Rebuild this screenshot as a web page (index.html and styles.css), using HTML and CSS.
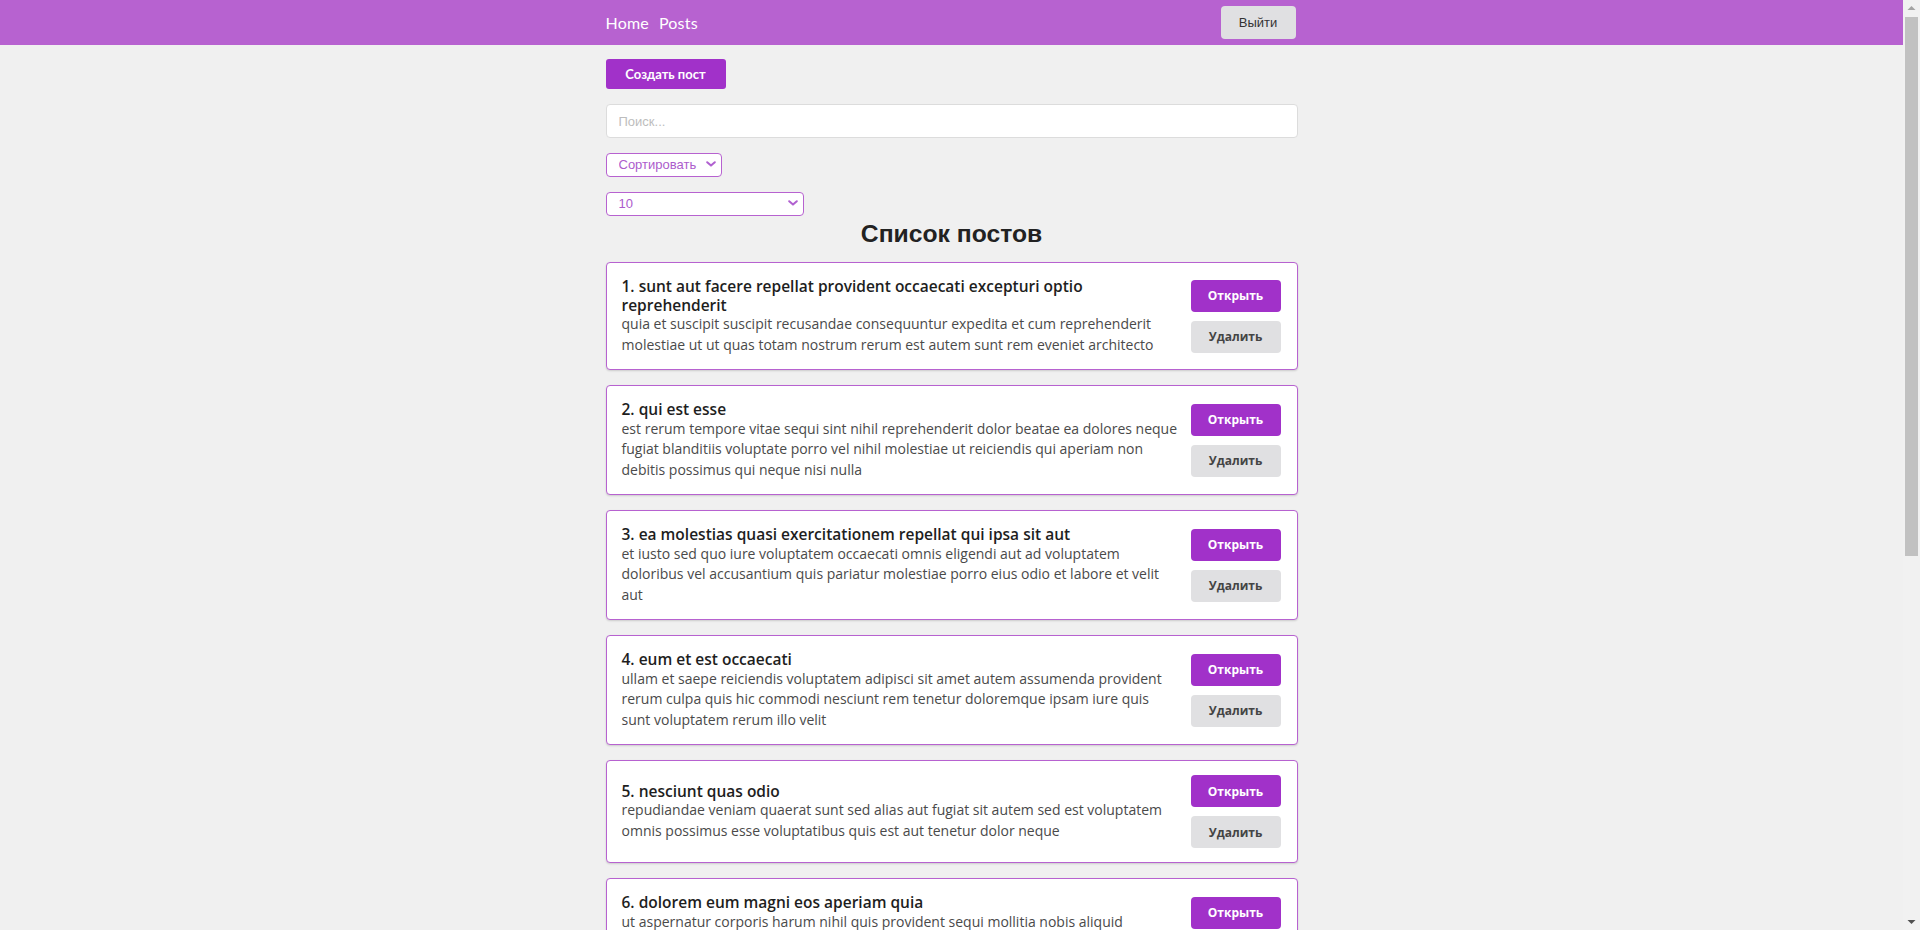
FILE: index.html
```html
<!DOCTYPE html>
<html lang="ru">
<head>
<meta charset="utf-8">
<title>Posts</title>
<link rel="stylesheet" href="styles.css">
</head>
<body>
<div class="page">
<header class="navbar">
  <div class="container nav-inner">
    <nav class="nav-links">
      <a href="#" class="nav-link">Home</a>
      <a href="#" class="nav-link">Posts</a>
    </nav>
    <button class="btn-logout">Выйти</button>
  </div>
</header>
<main class="container main">
  <button class="btn-create">Создать пост</button>
  <input class="search" type="text" placeholder="Поиск...">
  <div class="select-wrap select-sort">
    <select class="select"><option>Сортировать</option><option>По названию</option><option>По описанию</option></select>
    <svg class="chevron" viewBox="0 0 10 6" width="10" height="6"><path d="M1.2 1.2 L5 4.6 L8.8 1.2" fill="none" stroke="currentColor" stroke-width="2" stroke-linecap="round" stroke-linejoin="round"/></svg>
  </div>
  <div class="select-wrap select-limit">
    <select class="select"><option>10</option><option>25</option><option>-1</option></select>
    <svg class="chevron" viewBox="0 0 10 6" width="10" height="6"><path d="M1.2 1.2 L5 4.6 L8.8 1.2" fill="none" stroke="currentColor" stroke-width="2" stroke-linecap="round" stroke-linejoin="round"/></svg>
  </div>
  <h1 class="list-title">Список постов</h1>
  <div class="post-list">
    <div class="post">
      <div class="post-content">
        <div class="post-title">1. sunt aut facere repellat provident occaecati excepturi optio reprehenderit</div>
        <div class="post-body">quia et suscipit suscipit recusandae consequuntur expedita et cum reprehenderit molestiae ut ut quas totam nostrum rerum est autem sunt rem eveniet architecto</div>
      </div>
      <div class="post-btns"><button class="btn-open">Открыть</button><button class="btn-delete">Удалить</button></div>
    </div>
    <div class="post">
      <div class="post-content">
        <div class="post-title">2. qui est esse</div>
        <div class="post-body">est rerum tempore vitae sequi sint nihil reprehenderit dolor beatae ea dolores neque fugiat blanditiis voluptate porro vel nihil molestiae ut reiciendis qui aperiam non debitis possimus qui neque nisi nulla</div>
      </div>
      <div class="post-btns"><button class="btn-open">Открыть</button><button class="btn-delete">Удалить</button></div>
    </div>
    <div class="post">
      <div class="post-content">
        <div class="post-title">3. ea molestias quasi exercitationem repellat qui ipsa sit aut</div>
        <div class="post-body">et iusto sed quo iure voluptatem occaecati omnis eligendi aut ad voluptatem doloribus vel accusantium quis pariatur molestiae porro eius odio et labore et velit aut</div>
      </div>
      <div class="post-btns"><button class="btn-open">Открыть</button><button class="btn-delete">Удалить</button></div>
    </div>
    <div class="post">
      <div class="post-content">
        <div class="post-title">4. eum et est occaecati</div>
        <div class="post-body">ullam et saepe reiciendis voluptatem adipisci sit amet autem assumenda provident rerum culpa quis hic commodi nesciunt rem tenetur doloremque ipsam iure quis sunt voluptatem rerum illo velit</div>
      </div>
      <div class="post-btns"><button class="btn-open">Открыть</button><button class="btn-delete">Удалить</button></div>
    </div>
    <div class="post">
      <div class="post-content">
        <div class="post-title">5. nesciunt quas odio</div>
        <div class="post-body">repudiandae veniam quaerat sunt sed alias aut fugiat sit autem sed est voluptatem omnis possimus esse voluptatibus quis est aut tenetur dolor neque</div>
      </div>
      <div class="post-btns"><button class="btn-open">Открыть</button><button class="btn-delete">Удалить</button></div>
    </div>
    <div class="post">
      <div class="post-content">
        <div class="post-title">6. dolorem eum magni eos aperiam quia</div>
        <div class="post-body">ut aspernatur corporis harum nihil quis provident sequi mollitia nobis aliquid molestiae perspiciatis et ea nemo ab reprehenderit accusantium quas voluptate dolores velit et doloremque molestiae</div>
      </div>
      <div class="post-btns"><button class="btn-open">Открыть</button><button class="btn-delete">Удалить</button></div>
    </div>
    <div class="post">
      <div class="post-content">
        <div class="post-title">7. magnam facilis autem</div>
        <div class="post-body">dolore placeat quibusdam ea quo vitae magni quis enim qui quis quo nemo aut saepe quidem repellat excepturi ut quia sunt ut sequi eos ea sed quas</div>
      </div>
      <div class="post-btns"><button class="btn-open">Открыть</button><button class="btn-delete">Удалить</button></div>
    </div>
    <div class="post">
      <div class="post-content">
        <div class="post-title">8. dolorem dolore est ipsam</div>
        <div class="post-body">dignissimos aperiam dolorem qui eum facilis quibusdam animi sint suscipit qui sint possimus cum quaerat magni maiores excepturi ipsam ut commodi dolor voluptatum modi aut vitae</div>
      </div>
      <div class="post-btns"><button class="btn-open">Открыть</button><button class="btn-delete">Удалить</button></div>
    </div>
    <div class="post">
      <div class="post-content">
        <div class="post-title">9. nesciunt iure omnis dolorem tempora et accusantium</div>
        <div class="post-body">consectetur animi nesciunt iure dolore enim quia ad veniam autem ut quam aut nobis et est aut quod aut provident voluptas autem voluptas</div>
      </div>
      <div class="post-btns"><button class="btn-open">Открыть</button><button class="btn-delete">Удалить</button></div>
    </div>
    <div class="post">
      <div class="post-content">
        <div class="post-title">10. optio molestias id quia eum</div>
        <div class="post-body">quo et expedita modi cum officia vel magni doloribus qui repudiandae vero nisi sit quos veniam quod sed accusamus veritatis error</div>
      </div>
      <div class="post-btns"><button class="btn-open">Открыть</button><button class="btn-delete">Удалить</button></div>
    </div>
  </div>
</main>
</div>
<aside class="scrollbar" aria-hidden="true">
  <div class="sb-btn">
    <svg viewBox="0 0 17 17" width="17" height="17"><path d="M4.5 10 L8.5 6 L12.5 10 Z" fill="#a3a3a3"/></svg>
  </div>
  <div class="sb-track"><div class="sb-thumb"></div></div>
  <div class="sb-btn">
    <svg viewBox="0 0 17 17" width="17" height="17"><path d="M4.5 7 L8.5 11 L12.5 7 Z" fill="#505050"/></svg>
  </div>
</aside>
</body>
</html>
```

FILE: styles.css
```css
* { box-sizing: border-box; }

html, body {
  height: 100%;
}

body {
  margin: 0;
  display: flex;
  overflow: hidden;
  background: #f0f0f0;
  font-family: "Open Sans", "Liberation Sans", sans-serif;
  color: #222;
}

.page {
  flex: 1;
  min-width: 0;
  height: 100%;
  overflow: hidden;
}

/* fake window scrollbar */
.scrollbar {
  width: 17px;
  flex: none;
  height: 100%;
  display: flex;
  flex-direction: column;
  background: #f1f1f1;
}
.sb-btn {
  height: 17px;
  flex: none;
  display: flex;
}
.sb-track {
  flex: 1;
  padding: 0 2px;
}
.sb-thumb {
  height: 539px;
  background: #c1c1c1;
}

.container {
  width: 692px;
  margin: 0 auto;
}

.navbar {
  height: 45px;
  background: #b762d0;
}

.nav-inner {
  height: 100%;
  display: flex;
  align-items: center;
  justify-content: space-between;
}

.nav-links {
  display: flex;
  gap: 10px;
}

.nav-link {
  color: #fff;
  text-decoration: none;
  font-family: "Lato", sans-serif;
  font-size: 16px;
  font-weight: 400;
  letter-spacing: 0.2px;
}

.btn-logout {
  width: 75px;
  height: 33px;
  margin-right: 2px;
  border: none;
  border-radius: 4px;
  background: #e0e0e2;
  color: #333;
  font-family: "Liberation Sans", Arial, sans-serif;
  font-size: 13px;
  cursor: pointer;
}

.main {
  display: flex;
  flex-direction: column;
  align-items: flex-start;
  padding-bottom: 20px;
}

.btn-create {
  margin-top: 14px;
  width: 120px;
  height: 30px;
  border: none;
  border-radius: 3px;
  background: #a131c9;
  color: #fff;
  font-family: "Lato", sans-serif;
  font-weight: 700;
  font-size: 13px;
  cursor: pointer;
}

.search {
  margin-top: 15px;
  width: 100%;
  height: 34px;
  border: 1px solid #dcdcdc;
  border-radius: 4px;
  background: #fff;
  padding: 0 12px;
  font-family: "Liberation Sans", Arial, sans-serif;
  font-size: 13px;
  color: #333;
  outline: none;
}
.search::placeholder { color: #bdbdbd; }

.select-wrap {
  position: relative;
  height: 24px;
  color: #b060d0;
}
.select-sort { margin-top: 14px; width: 116px; }
.select-limit { margin-top: 15px; width: 198px; }

.select {
  appearance: none;
  -webkit-appearance: none;
  width: 100%;
  height: 100%;
  border: 1px solid #b762d0;
  border-radius: 4px;
  background: #fff;
  color: #ac5ccc;
  padding: 0 20px 0 12px;
  font-family: "Liberation Sans", Arial, sans-serif;
  font-size: 13px;
  outline: none;
}

.chevron {
  position: absolute;
  right: 6px;
  top: 9px;
  pointer-events: none;
  color: #b060d0;
}

.list-title {
  align-self: center;
  margin: 5px 0 14px;
  font-family: "Liberation Sans", Arial, sans-serif;
  font-size: 24.7px;
  line-height: 28px;
  font-weight: 700;
  color: #222;
}

.post-list {
  width: 100%;
  display: flex;
  flex-direction: column;
  gap: 15px;
}

.post {
  display: flex;
  align-items: center;
  background: #fff;
  border: 1px solid #b762d0;
  border-radius: 4px;
  box-shadow: 0 1px 2px rgba(0, 0, 0, 0.15);
  padding: 14px 16px 14px 15px;
}

.post-content {
  flex: 1;
  margin-right: 12px;
  min-width: 0;
}

.post-title {
  font-size: 15.5px;
  line-height: 18.5px;
  font-weight: 600;
  color: #1e1e1e;
}

.post-body {
  font-size: 14px;
  line-height: 20.5px;
  color: #4a4a4a;
}

.post-btns {
  display: flex;
  flex-direction: column;
  gap: 9px;
}

.btn-open, .btn-delete {
  width: 90px;
  height: 32px;
  border: none;
  border-radius: 4px;
  font-family: "Open Sans", sans-serif;
  font-weight: 700;
  font-size: 12px;
  cursor: pointer;
}
.btn-open { background: #a131c9; color: #fff; }
.btn-delete { background: #e0e0e2; color: #444; }
```
